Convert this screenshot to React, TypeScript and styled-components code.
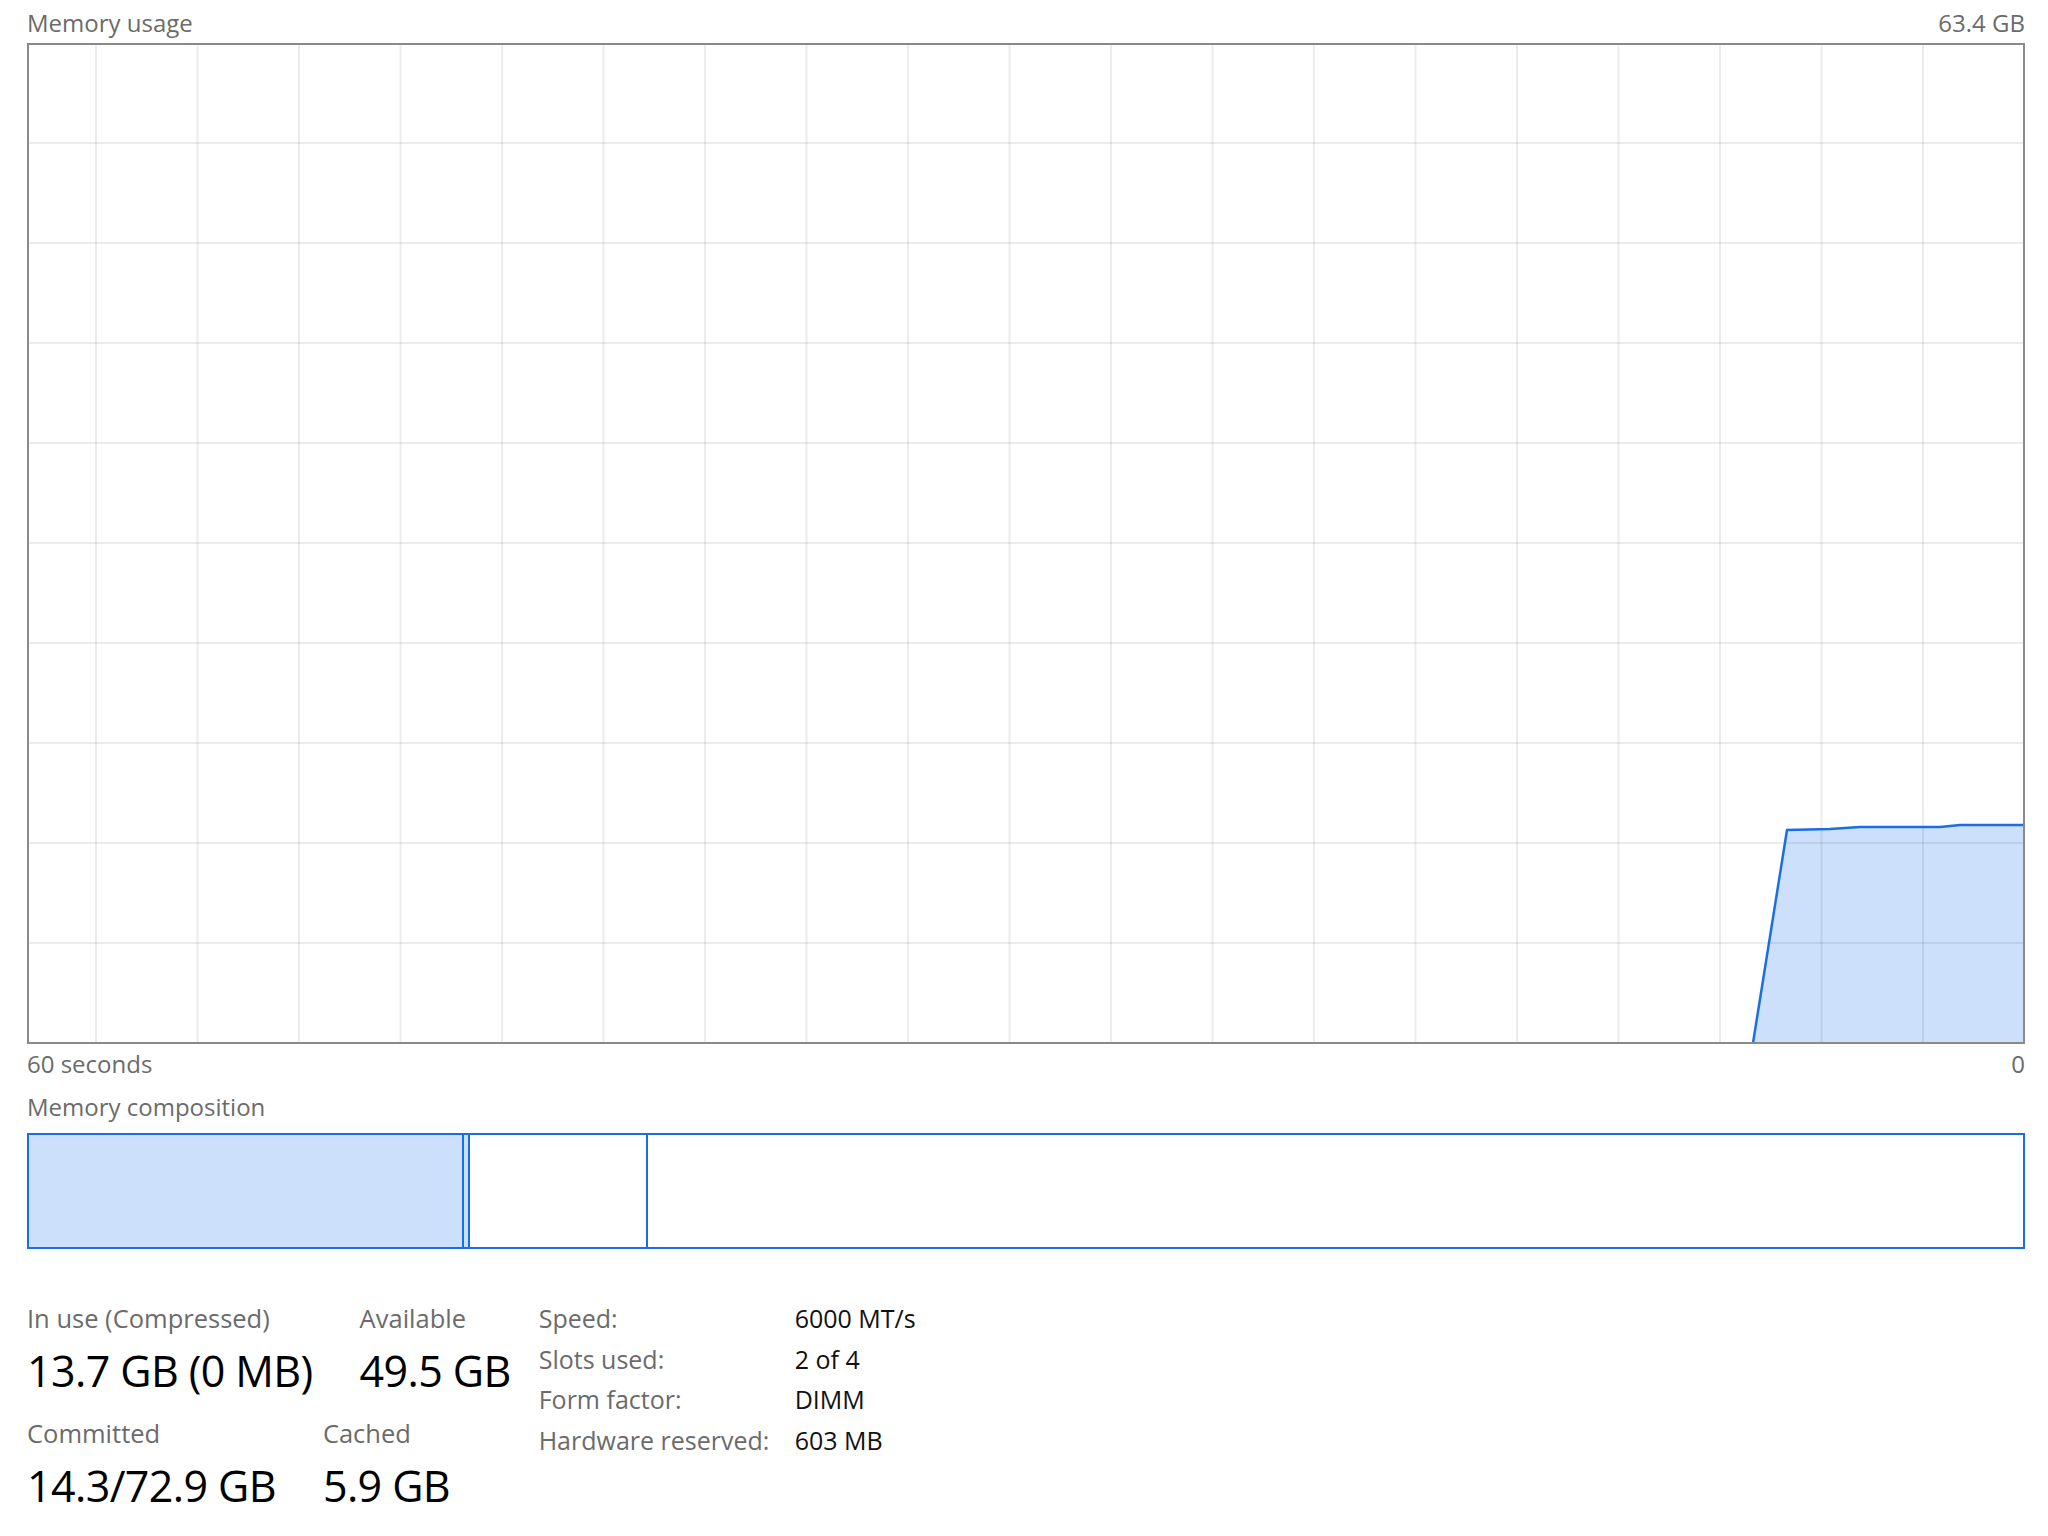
import styled, { createGlobalStyle } from "styled-components";

const GlobalStyle = createGlobalStyle`
  html, body {
    margin: 0;
    background: #ffffff;
  }
  body {
    font-family: "Open Sans", "Noto Sans", sans-serif;
  }
`;

const COLUMNS = Array.from({ length: 19 }, (_, i) => 67 + i * 101.5);
const ROWS = Array.from({ length: 9 }, (_, i) => 98 + i * 100);
const USAGE: [number, number][] = [
    [1724, 998],
    [1758, 785],
    [1801, 784],
    [1831, 782],
    [1911, 782],
    [1931, 780],
    [1995, 780],
];

const composition = [
    { key: "inuse", width: 435, fill: true },
    { key: "modified", width: 6, fill: true },
    { key: "standby", width: 178, fill: false },
    { key: "free", width: 0, fill: false },
];

const details = [
    ["Speed:", "6000 MT/s"],
    ["Slots used:", "2 of 4"],
    ["Form factor:", "DIMM"],
    ["Hardware reserved:", "603 MB"],
];

export default function App() {
    const line = USAGE.map(([x, y]) => `${x},${y}`).join(" ");
    const area = `${line} 1995,998`;

    return (
        <>
            <GlobalStyle />
            <Page>
                <AxisRow $top={8}>
                    <AxisLabel>Memory usage</AxisLabel>
                    <AxisLabel>63.4 GB</AxisLabel>
                </AxisRow>
                <Chart>
                    <svg viewBox="0 0 1994 997" preserveAspectRatio="none">
                        <polygon points={area} fill="#cce0fb" />
                        {COLUMNS.map((x) => (
                            <line key={x} x1={x} y1={0} x2={x} y2={997} stroke="rgba(0,0,0,0.075)" strokeWidth={2} />
                        ))}
                        {ROWS.map((y) => (
                            <line key={y} x1={0} y1={y} x2={1994} y2={y} stroke="rgba(0,0,0,0.075)" strokeWidth={2} />
                        ))}
                        <polyline points={line} fill="none" stroke="#1a6de3" strokeWidth={2.5} />
                    </svg>
                </Chart>
                <AxisRow $top={5}>
                    <AxisLabel>60 seconds</AxisLabel>
                    <AxisLabel>0</AxisLabel>
                </AxisRow>
                <SectionTitle>Memory composition</SectionTitle>
                <CompositionBar>
                    {composition.map((s) => (
                        <Segment key={s.key} $width={s.width} $fill={s.fill} />
                    ))}
                </CompositionBar>
                <Stats>
                    <Summary>
                        <StatRow>
                            <Stat>
                                <StatLabel>In use (Compressed)</StatLabel>
                                <StatValue>13.7 GB (0 MB)</StatValue>
                            </Stat>
                            <Stat>
                                <StatLabel>Available</StatLabel>
                                <StatValue>49.5 GB</StatValue>
                            </Stat>
                        </StatRow>
                        <StatRow>
                            <Stat>
                                <StatLabel>Committed</StatLabel>
                                <StatValue>14.3/72.9 GB</StatValue>
                            </Stat>
                            <Stat>
                                <StatLabel>Cached</StatLabel>
                                <StatValue>5.9 GB</StatValue>
                            </Stat>
                        </StatRow>
                    </Summary>
                    <Details>
                        {details.map(([label, value]) => (
                            <DetailRow key={label}>
                                <DetailLabel>{label}</DetailLabel>
                                <DetailValue>{value}</DetailValue>
                            </DetailRow>
                        ))}
                    </Details>
                </Stats>
            </Page>
        </>
    );
}

const Page = styled.main`
    padding: 0 23px 0 27px;
    display: flex;
    flex-direction: column;
`;

const AxisRow = styled.div<{ $top: number }>`
    display: flex;
    justify-content: space-between;
    padding-top: ${(p) => p.$top}px;
`;

const AxisLabel = styled.span`
    font-size: 24px;
    line-height: 30px;
    color: #6b6b6b;
`;

const Chart = styled.div`
    margin-top: 5px;
    height: 1001px;
    box-sizing: border-box;
    border: 2px solid #8a8a8a;

    svg {
        display: block;
        width: 100%;
        height: 100%;
    }
`;

const SectionTitle = styled.h2`
    margin: 13px 0 0;
    font-size: 24px;
    font-weight: 400;
    line-height: 30px;
    color: #6b6b6b;
`;

const CompositionBar = styled.div`
    margin-top: 11px;
    height: 116px;
    box-sizing: border-box;
    border: 2px solid #1a6de3;
    display: flex;
`;

const Segment = styled.div<{ $width: number; $fill: boolean }>`
    flex: ${(p) => (p.$width ? `0 0 ${p.$width}px` : "1")};
    box-sizing: border-box;
    background: ${(p) => (p.$fill ? "#cce0fb" : "#ffffff")};
    border-right: 2px solid #1a6de3;

    &:last-child {
        border-right: none;
    }
`;

const Stats = styled.section`
    margin-top: 52px;
    display: flex;
    align-items: flex-start;
    gap: 28px;
`;

const Summary = styled.div`
    display: flex;
    flex-direction: column;
    gap: 17px;
`;

const StatRow = styled.div`
    display: flex;
    gap: 47px;
`;

const Stat = styled.div`
    display: flex;
    flex-direction: column;
`;

const StatLabel = styled.span`
    font-size: 25.5px;
    line-height: 34px;
    color: #6b6b6b;
    white-space: nowrap;
`;

const StatValue = styled.span`
    margin-top: 8px;
    font-size: 43px;
    line-height: 56px;
    letter-spacing: -0.6px;
    color: #000000;
    white-space: nowrap;
`;

const Details = styled.div`
    display: flex;
    flex-direction: column;
    gap: 6.5px;
`;

const DetailRow = styled.div`
    display: grid;
    grid-template-columns: 256px auto;
    font-size: 25px;
    line-height: 34px;
`;

const DetailLabel = styled.span`
    color: #6b6b6b;
`;

const DetailValue = styled.span`
    color: #111111;
`;
